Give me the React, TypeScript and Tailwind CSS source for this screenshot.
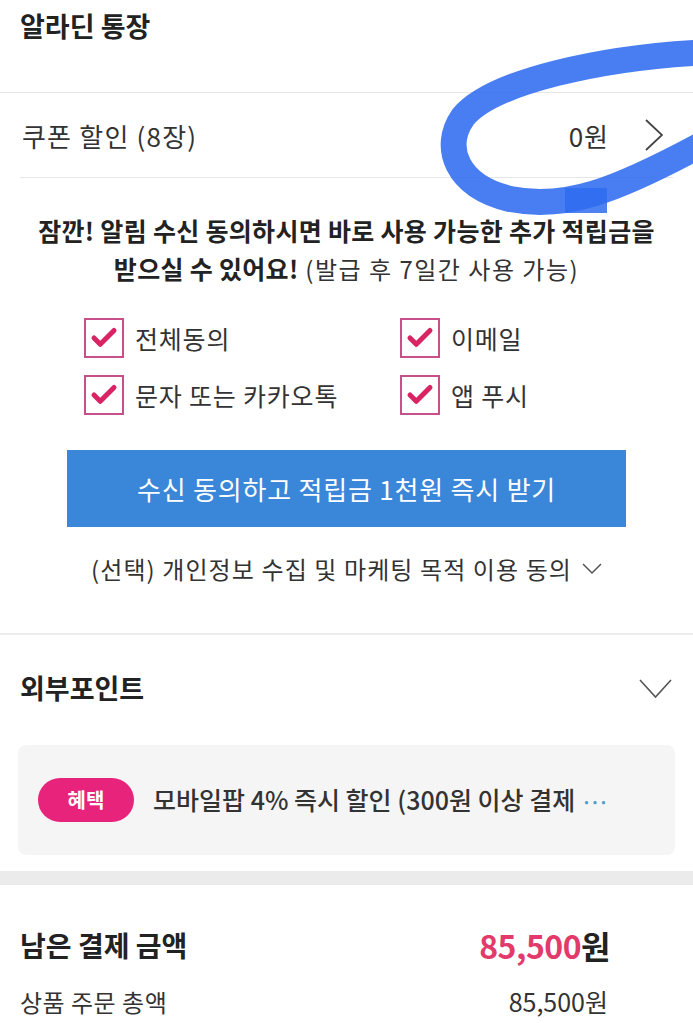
import { Check } from "lucide-react";

const font = { fontFamily: '"Noto Sans CJK KR", "Noto Sans", sans-serif' };

function CheckBox({ label }: { label: string }) {
  return (
    <div className="flex items-center gap-[11px]">
      <div className="flex h-[40px] w-[40px] items-center justify-center border-2 border-[#c8508a] bg-white">
        <Check className="h-[30px] w-[30px] text-[#d92463]" strokeWidth={4} />
      </div>
      <span className="text-[25px] leading-none tracking-[0.8px] text-[#333]">{label}</span>
    </div>
  );
}

export default function App() {
  return (
    <div className="relative h-[1023px] w-[693px] overflow-hidden bg-white" style={font}>
      {/* 알라딘 통장 */}
      <div className="flex h-[92px] items-start px-[20px] pt-[8px]">
        <h1 className="text-[27px] font-bold leading-[36px] text-[#222]">알라딘 통장</h1>
      </div>
      <div className="h-px bg-[#e6e6e6]" />

      {/* 쿠폰 할인 */}
      <div className="flex h-[84px] items-center justify-between pl-[22px] pr-[30px]">
        <span className="text-[26px] tracking-[1.2px] text-[#333]">쿠폰 할인 (8장)</span>
        <div className="flex items-center gap-[36px]">
          <span className="text-[26px] tracking-[1px] text-[#333]">0원</span>
          <svg width="18" height="32" viewBox="0 0 18 32">
            <polyline points="1,1 17,16 1,31" fill="none" stroke="#444" strokeWidth="1.8" />
          </svg>
        </div>
      </div>
      <div className="mx-[20px] h-px bg-[#e6e6e6]" />

      {/* 알림 수신 동의 */}
      <div className="flex flex-col items-center pt-[33px]">
        <p className="text-[25px] font-bold leading-[38px] tracking-[0.3px] text-[#222]">
          잠깐! 알림 수신 동의하시면 바로 사용 가능한 추가 적립금을
        </p>
        <p className="text-[25px] font-bold leading-[38px] tracking-[0.3px] text-[#222]">
          받으실 수 있어요!
          <span className="text-[24px] font-normal tracking-[1.5px] text-[#333]"> (발급 후 7일간 사용 가능)</span>
        </p>
      </div>

      <div className="mt-[30px] grid grid-cols-[316px_1fr] gap-y-[17px] pl-[84px]">
        <CheckBox label="전체동의" />
        <CheckBox label="이메일" />
        <CheckBox label="문자 또는 카카오톡" />
        <CheckBox label="앱 푸시" />
      </div>

      <div className="mx-[67px] mt-[35px] flex h-[77px] items-center justify-center bg-[#3a86d9]">
        <span className="text-[26px] tracking-[0.8px] text-white">수신 동의하고 적립금 1천원 즉시 받기</span>
      </div>

      <div className="mt-[24px] flex items-center justify-center gap-[10px]">
        <span className="text-[24px] tracking-[1.1px] text-[#333]">(선택) 개인정보 수집 및 마케팅 목적 이용 동의</span>
        <svg width="20" height="12" viewBox="0 0 20 12">
          <polyline points="1,1 10,10 19,1" fill="none" stroke="#555" strokeWidth="1.5" />
        </svg>
      </div>

      <div className="mt-[46px] h-[2px] bg-[#ececec]" />

      {/* 외부포인트 */}
      <div className="flex h-[107px] items-center justify-between pl-[20px] pr-[21px]">
        <h2 className="text-[27px] font-bold text-[#222]">외부포인트</h2>
        <svg width="33" height="20" viewBox="0 0 33 20">
          <polyline points="1,1 16.5,18 32,1" fill="none" stroke="#555" strokeWidth="1.6" />
        </svg>
      </div>

      <div className="mx-[18px] mt-[3px] flex h-[110px] items-center gap-[19px] rounded-[8px] bg-[#f5f5f5] pl-[20px]">
        <span className="flex h-[44px] w-[96px] items-center justify-center rounded-full bg-[#e8237b] text-[20px] font-bold text-white">
          혜택
        </span>
        <span className="text-[25px] font-medium text-[#333]">
          모바일팝 4% 즉시 할인 (300원 이상 결제{" "}
          <span className="text-[20px] tracking-[-3px] text-[#4a9fd0]">···</span>
        </span>
      </div>

      <div className="mt-[16px] h-[14px] bg-[#ebebeb]" />

      {/* 남은 결제 금액 */}
      <div className="flex items-center justify-between pl-[20px] pr-[83px] pt-[36px]">
        <span className="text-[28px] font-bold text-[#222]">남은 결제 금액</span>
        <span className="text-[32px] font-bold tracking-[-0.5px]">
          <span className="text-[#e23a6b]">85,500</span>
          <span className="text-[#222]">원</span>
        </span>
      </div>
      <div className="flex items-center justify-between pl-[20px] pr-[85px] pt-[14px]">
        <span className="text-[24px] tracking-[0.5px] text-[#333]">상품 주문 총액</span>
        <span className="text-[25px] text-[#333]">85,500원</span>
      </div>

      {/* blue marker scribble */}
      <svg
        className="pointer-events-none absolute left-0 top-0"
        width="693"
        height="260"
        viewBox="0 0 693 260"
      >
        <path
          d="M710 52 C 600 57, 492 82, 463 117 C 442 147, 456 186, 510 199 C 565 210, 615 192, 710 140"
          fill="none"
          stroke="#2f6cf0"
          strokeOpacity="0.88"
          strokeWidth="26"
          strokeLinecap="round"
        />
        <rect x="565" y="188" width="42" height="25" fill="#2f6cf0" fillOpacity="0.85" />
      </svg>
    </div>
  );
}
